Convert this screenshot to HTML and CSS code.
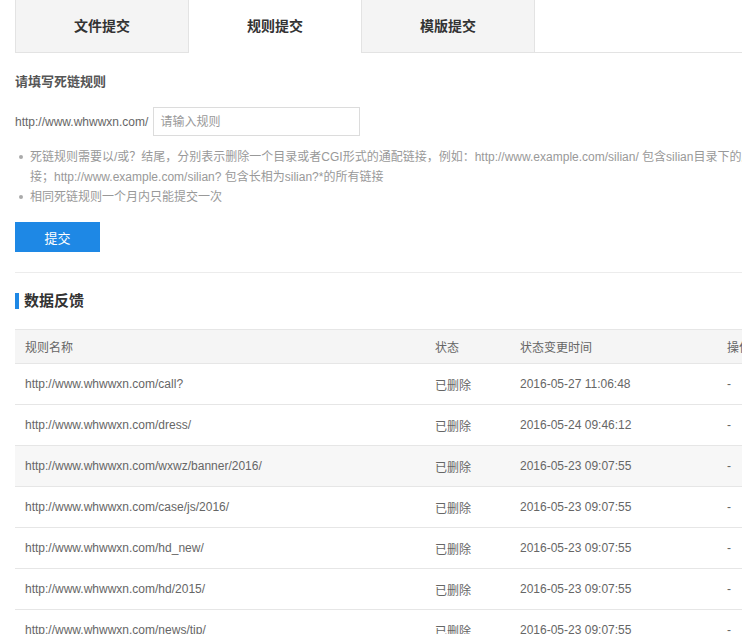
FILE: index.html
```html
<!DOCTYPE html>
<html lang="zh-CN">
<head>
<meta charset="utf-8">
<title>死链提交</title>
<link rel="stylesheet" href="styles.css">
</head>
<body>
<div class="page">
  <div class="tabs">
    <div class="tab">文件提交</div>
    <div class="tab active">规则提交</div>
    <div class="tab">模版提交</div>
  </div>

  <h3 class="form-title">请填写死链规则</h3>

  <div class="rule-row">
    <span class="rule-prefix">http://www.whwwxn.com/</span>
    <input class="rule-input" type="text" placeholder="请输入规则">
  </div>

  <ul class="tips">
    <li>死链规则需要以/或？结尾，分别表示删除一个目录或者CGI形式的通配链接，例如：http://www.example.com/silian/ 包含silian目录下的所有链接；http://www.example.com/silian? 包含长相为silian?*的所有链接</li>
    <li>相同死链规则一个月内只能提交一次</li>
  </ul>

  <button class="btn-submit" type="button">提交</button>

  <div class="divider"></div>

  <h2 class="section-title">数据反馈</h2>

  <table class="data-table">
    <thead>
      <tr>
        <th class="col-name">规则名称</th>
        <th class="col-status">状态</th>
        <th class="col-time">状态变更时间</th>
        <th class="col-op">操作</th>
      </tr>
    </thead>
    <tbody>
      <tr><td>http://www.whwwxn.com/call?</td><td>已删除</td><td>2016-05-27 11:06:48</td><td>-</td></tr>
      <tr><td>http://www.whwwxn.com/dress/</td><td>已删除</td><td>2016-05-24 09:46:12</td><td>-</td></tr>
      <tr class="hover"><td>http://www.whwwxn.com/wxwz/banner/2016/</td><td>已删除</td><td>2016-05-23 09:07:55</td><td>-</td></tr>
      <tr><td>http://www.whwwxn.com/case/js/2016/</td><td>已删除</td><td>2016-05-23 09:07:55</td><td>-</td></tr>
      <tr><td>http://www.whwwxn.com/hd_new/</td><td>已删除</td><td>2016-05-23 09:07:55</td><td>-</td></tr>
      <tr><td>http://www.whwwxn.com/hd/2015/</td><td>已删除</td><td>2016-05-23 09:07:55</td><td>-</td></tr>
      <tr><td>http://www.whwwxn.com/news/tip/</td><td>已删除</td><td>2016-05-23 09:07:55</td><td>-</td></tr>
    </tbody>
  </table>
</div>
</body>
</html>
```

FILE: styles.css
```css
html, body {
  margin: 0;
  padding: 0;
  overflow: hidden;
  background: #fff;
}

body {
  font-family: "Liberation Sans", Arial, "Noto Sans CJK SC", sans-serif;
  font-size: 12px;
  color: #666;
}

.page {
  width: 775px;
  margin-left: 15px;
}

/* Tabs */
.tabs {
  display: flex;
  width: 1000px;
  border-bottom: 1px solid #e3e3e3;
}

.tab {
  width: 172px;
  height: 53px;
  line-height: 52px;
  margin-bottom: -1px;
  box-sizing: border-box;
  border: 1px solid #e3e3e3;
  border-top: 0;
  background: #f4f4f4;
  text-align: center;
  font-size: 14px;
  font-weight: bold;
  color: #333;
}

.tab:first-child,
.tab:last-child {
  width: 174px;
}

.tab.active {
  background: #fff;
  border-left: 0;
  border-right: 0;
  border-bottom-color: #fff;
}

/* Form */
.form-title {
  margin: 19px 0 0;
  line-height: 20px;
  font-size: 13px;
  font-weight: bold;
  color: #555;
}

.rule-row {
  display: flex;
  align-items: center;
  gap: 5px;
  margin-top: 15px;
}

.rule-prefix {
  font-size: 12px;
  color: #666;
}

.rule-input {
  width: 207px;
  height: 29px;
  box-sizing: border-box;
  margin: 0;
  padding: 0 6px;
  border: 1px solid #dcdcdc;
  outline: none;
  font-family: "Liberation Sans", Arial, "Noto Sans CJK SC", sans-serif;
  font-size: 12px;
  color: #666;
}

.rule-input::placeholder {
  color: #999;
}

.tips {
  list-style: none;
  width: 775px;
  margin: 11px 0 0;
  padding: 0;
  font-size: 12px;
  line-height: 20px;
  color: #999;
}

.tips li {
  position: relative;
  padding-left: 15px;
}

.tips li::before {
  content: "";
  position: absolute;
  left: 4px;
  top: 8px;
  width: 4px;
  height: 4px;
  border-radius: 50%;
  background: #aaa;
}

.btn-submit {
  display: block;
  width: 85px;
  height: 30px;
  margin-top: 15px;
  padding: 0;
  border: 0;
  background: #1e88e5;
  color: #fff;
  font-family: "Liberation Sans", Arial, "Noto Sans CJK SC", sans-serif;
  font-size: 13px;
  cursor: pointer;
}

.divider {
  height: 1px;
  margin-top: 20px;
  background: #ececec;
  width: 1000px;
}

.section-title {
  margin: 20px 0 0;
  height: 16px;
  line-height: 16px;
  border-left: 4px solid #1e88e5;
  padding-left: 5px;
  font-size: 15px;
  font-weight: bold;
  color: #333;
}

/* Table */
.data-table {
  width: 775px;
  margin-top: 20px;
  border-collapse: collapse;
  table-layout: fixed;
  border-top: 1px solid #e6e6e6;
}

.data-table th,
.data-table td {
  padding: 0 0 0 10px;
  text-align: left;
  font-weight: normal;
  color: #666;
  white-space: nowrap;
  border-bottom: 1px solid #e6e6e6;
}

.data-table th {
  height: 33px;
  background: #f5f5f5;
}

.data-table td {
  height: 40px;
}

.data-table tr.hover td {
  background: #f7f7f7;
}

.col-name { width: 400px; }
.col-status { width: 75px; }
.col-time { width: 197px; }
.col-op { width: 63px; }
```
